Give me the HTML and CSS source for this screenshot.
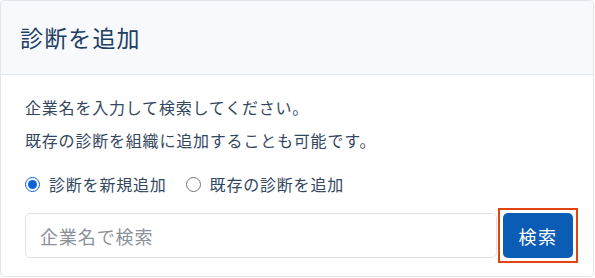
FILE: index.html
```html
<!DOCTYPE html>
<html lang="ja">
<head>
<meta charset="utf-8">
<title>診断を追加</title>
<link rel="stylesheet" href="styles.css">
</head>
<body>
<div class="card">
  <div class="card-header">
    <h2 class="card-title">診断を追加</h2>
  </div>
  <div class="card-body">
    <p class="desc">企業名を入力して検索してください。</p>
    <p class="desc">既存の診断を組織に追加することも可能です。</p>
    <div class="radios">
      <label class="radio"><input type="radio" name="mode" checked><span>診断を新規追加</span></label>
      <label class="radio"><input type="radio" name="mode"><span>既存の診断を追加</span></label>
    </div>
    <div class="search">
      <input class="search-input" type="text" placeholder="企業名で検索">
      <span class="btn-wrap"><button class="search-btn" type="button">検索</button></span>
    </div>
  </div>
</div>
</body>
</html>
```
FILE: styles.css
```css
html, body {
  margin: 0;
  padding: 0;
  background: #ffffff;
}
body {
  font-family: "Noto Sans CJK JP", "Noto Sans", sans-serif;
  color: #33475e;
}
.card {
  box-sizing: border-box;
  width: 594px;
  height: 277px;
  border: 1px solid #e1e5ec;
  border-radius: 4px;
  background: #fff;
}
.card-header {
  box-sizing: border-box;
  height: 74px;
  background: #f8f9fc;
  border-bottom: 1px solid #e1e5ec;
  display: flex;
  align-items: center;
  padding: 0 19px;
  border-radius: 4px 4px 0 0;
}
.card-title {
  margin: 0;
  font-size: 23px;
  font-weight: 400;
  letter-spacing: 0.05em;
  color: #213e63;
  line-height: 1;
}
.card-body {
  padding: 16px 20px 0 24px;
}
.desc {
  margin: 0;
  font-size: 16px;
  line-height: 33px;
  letter-spacing: 0.05em;
}
.radios {
  display: flex;
  gap: 19px;
  margin-top: 15px;
  height: 24px;
  align-items: center;
}
.radio {
  display: flex;
  align-items: center;
  font-size: 16px;
  letter-spacing: 0.05em;
}
.radio input {
  margin: 0 9px 0 0;
  width: 15px;
  height: 15px;
  accent-color: #0b63d6;
}
.search {
  display: flex;
  gap: 6px;
  margin-top: 17px;
}
.search-input {
  box-sizing: border-box;
  flex: 1;
  height: 45px;
  border: 1px solid #dfe3ea;
  border-radius: 5px;
  padding: 0 14px;
  font-family: inherit;
  font-size: 18px;
  letter-spacing: 0.05em;
  color: #33475e;
}
.search-input::placeholder {
  color: #8b9099;
}
.btn-wrap {
  position: relative;
  display: flex;
}
.btn-wrap::after {
  content: "";
  position: absolute;
  left: -5px;
  top: -5px;
  right: -5px;
  bottom: -5px;
  border: 2px solid #e2440f;
  pointer-events: none;
}
.search-btn {
  box-sizing: border-box;
  width: 70px;
  height: 45px;
  border: none;
  border-radius: 5px;
  background: #0b5cb5;
  color: #fff;
  font-family: inherit;
  font-size: 18px;
  letter-spacing: 0.08em;
  padding: 0;
}
```
